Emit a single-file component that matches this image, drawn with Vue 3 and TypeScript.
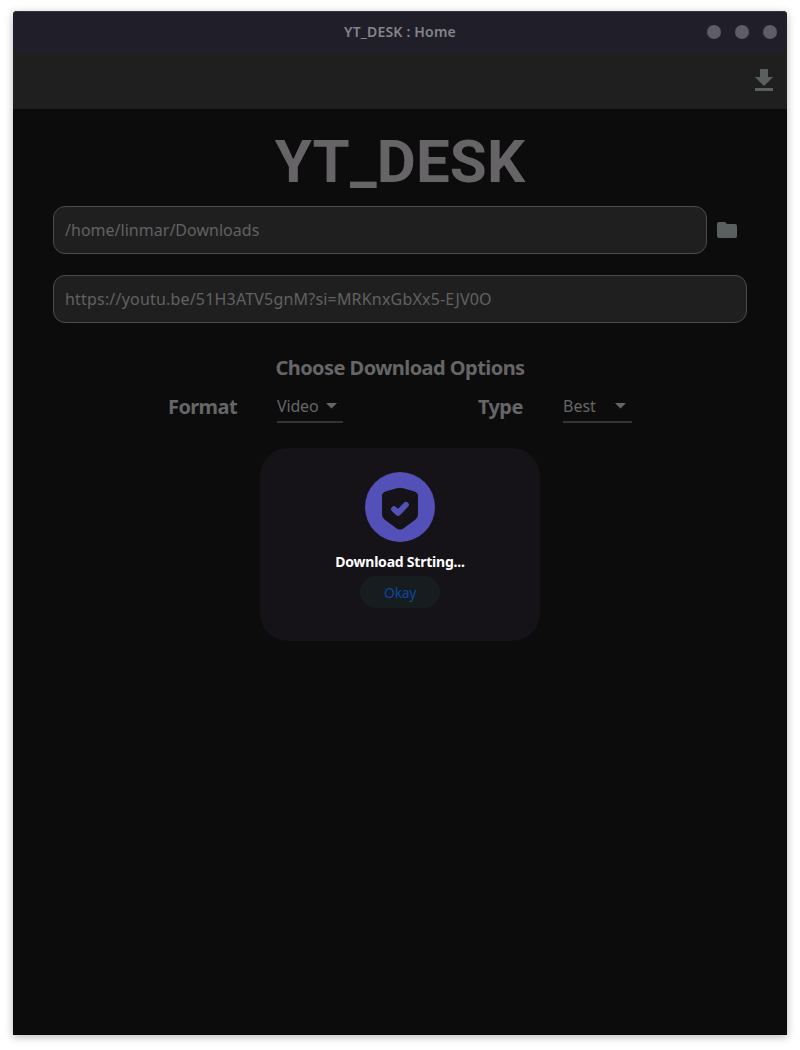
<script setup lang="ts">
import { ref } from 'vue'

interface Option {
  key: string
  label: string
  value: string
}

const folder = ref('/home/linmar/Downloads')
const url = ref('https://youtu.be/51H3ATV5gnM?si=MRKnxGbXx5-EJV0O')
const options: Option[] = [
  { key: 'format', label: 'Format', value: 'Video' },
  { key: 'type', label: 'Type', value: 'Best' },
]
</script>

<template>
  <div class="page">
    <main class="window">
      <header class="titlebar">
        <span class="caption">YT_DESK : Home</span>
        <div class="controls"><i v-for="n in 3" :key="n"></i></div>
      </header>
      <nav class="appbar">
        <svg class="download" width="24" height="28" viewBox="0 0 24 28">
          <path d="M8 3h8v8h5l-9 9-9-9h5zM3 22h18v3H3z" />
        </svg>
      </nav>
      <section class="content">
        <h1>YT_DESK</h1>
        <div class="row">
          <div class="field"><span class="path">{{ folder }}</span></div>
          <svg class="folder" width="20" height="16" viewBox="0 0 20 16">
            <path d="M2 0h6l2 2h8a2 2 0 0 1 2 2v10a2 2 0 0 1-2 2H2a2 2 0 0 1-2-2V2a2 2 0 0 1 2-2z" />
          </svg>
        </div>
        <div class="row second">
          <div class="field"><span class="url">{{ url }}</span></div>
        </div>
        <h2><span>Choose Download Options</span></h2>
        <div class="options">
          <div v-for="o in options" :key="o.key" class="option" :class="o.key">
            <span class="label">{{ o.label }}</span>
            <div class="select">
              <span class="value">{{ o.value }}</span>
              <svg width="11" height="6" viewBox="0 0 11 6"><path d="M0 0h11L5.5 5.5z" /></svg>
            </div>
          </div>
        </div>
        <div class="dialog">
          <svg width="70" height="70" viewBox="0 0 70 70">
            <circle cx="35" cy="35" r="35" fill="#5350b7" />
            <path
              d="M31.8 16.2Q35 15.2 38.2 16.2L49.5 19.5Q53 20.6 53 24V42.5Q53 45.6 50.5 47.6L39 56Q35 59.2 31 56L19.5 47.6Q17 45.6 17 42.5V24Q17 20.6 20.5 19.5Z"
              fill="#151218"
            />
            <path
              d="M29 37.2L33 41L41 32.8"
              fill="none"
              stroke="#5350b7"
              stroke-width="5.8"
              stroke-linecap="round"
              stroke-linejoin="round"
            />
          </svg>
          <p><span>Download Strting...</span></p>
          <button type="button">Okay</button>
        </div>
      </section>
    </main>
  </div>
</template>

<style>
body {
  margin: 0;
  background: #fff;
}
</style>

<style scoped>
.page {
  box-sizing: border-box;
  height: 1050px;
  padding: 11px 13px 15px;
  overflow: hidden;
  font-family: "Noto Sans", sans-serif;
  color: #666567;
}
.window {
  height: 1024px;
  background: #0c0c0c;
  border-radius: 4px 4px 0 0;
  box-shadow: 0 2px 9px rgba(0, 0, 0, 0.28);
}
.titlebar {
  box-sizing: border-box;
  height: 41px;
  display: grid;
  grid-template-columns: 1fr auto 1fr;
  align-items: center;
  background: #201f29;
  border-top: 1px solid #34353a;
  border-radius: 4px 4px 0 0;
}
.caption {
  grid-column: 2;
  font-size: 14px;
  font-weight: 600;
  line-height: 20px;
  letter-spacing: 0.2px;
  color: #858486;
}
.controls {
  display: flex;
  justify-content: flex-end;
  gap: 14px;
  padding-right: 10px;
}
.controls i {
  width: 14px;
  height: 14px;
  border-radius: 50%;
  background: #5e5c67;
}
.appbar {
  box-sizing: border-box;
  height: 57px;
  display: flex;
  justify-content: flex-end;
  align-items: center;
  padding: 0 11px 1px 0;
  background: #1f1f1f;
}
.download,
.folder {
  fill: #5a5f5f;
}
.content {
  padding: 18px 40px 0;
}
h1 {
  margin: 0;
  height: 79px;
  font: 700 60px/70px Roboto, sans-serif;
  letter-spacing: 0.15px;
  text-align: center;
  color: #666467;
}
.row {
  display: flex;
  align-items: center;
  gap: 10px;
  padding-right: 10px;
}
.second {
  margin-top: 21px;
  padding-right: 0;
}
.field {
  box-sizing: border-box;
  flex: 1;
  height: 48px;
  padding: 0 11px;
  display: flex;
  align-items: center;
  border: 1px solid #4b4b4b;
  border-radius: 12px;
  background: #1f1f1f;
  font-size: 16px;
  line-height: 24px;
  color: #626163;
}
.path {
  letter-spacing: 0.02px;
}
.url {
  letter-spacing: 0.19px;
}
h2 {
  margin: 31px 0 0;
  text-align: center;
  font-size: 20px;
  line-height: 28px;
  letter-spacing: -0.55px;
}
.options {
  display: flex;
  margin-top: 7px;
  padding-left: 115px;
}
.option {
  display: flex;
  height: 34px;
}
.format {
  width: 310px;
}
.format .label {
  width: 109px;
}
.type .label {
  width: 85px;
}
.label {
  font-size: 20px;
  font-weight: 700;
  line-height: 36px;
  letter-spacing: -0.6px;
}
.select {
  box-sizing: border-box;
  width: 66px;
  height: 34px;
  padding-right: 6px;
  padding-top: 2px;
  display: flex;
  align-items: center;
  justify-content: space-between;
  border-bottom: 2px solid #343335;
  font-size: 16px;
  letter-spacing: -0.15px;
  fill: #666567;
}
.type .select {
  width: 69px;
}
.type .value {
  letter-spacing: 0;
}
.dialog {
  box-sizing: border-box;
  width: 280px;
  height: 193px;
  margin: 24.5px auto 0;
  padding-top: 24px;
  display: flex;
  flex-direction: column;
  align-items: center;
  border-radius: 28px;
  background: #151218;
}
.dialog svg {
  flex: none;
}
.dialog p {
  margin: 10px 0 4.5px;
  font-size: 14px;
  font-weight: 700;
  line-height: 20px;
  letter-spacing: -0.22px;
  color: #fff;
}
button {
  width: 80px;
  height: 32px;
  padding: 2px 0 0;
  border: 0;
  border-radius: 16px;
  background: #171c1e;
  color: #0d47a1;
  font: 400 14px/20px "Noto Sans", sans-serif;
  letter-spacing: -0.4px;
}
</style>
